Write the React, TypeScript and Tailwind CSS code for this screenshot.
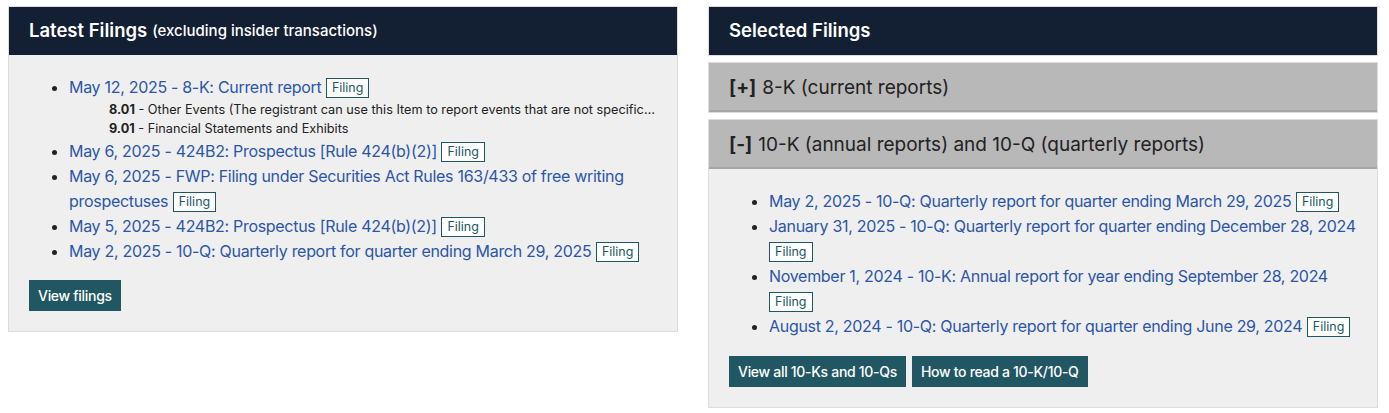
import React from "react";

const font = { fontFamily: "Inter, 'Noto Sans', Arial, sans-serif" };

function Badge() {
  return (
    <span className="inline-block border border-[#215762] bg-white px-[5px] py-0 align-[1px] text-[12.5px] leading-[18px] tracking-normal text-[#215762]">
      Filing
    </span>
  );
}

function Item({ text, sub }: { text: string; sub?: React.ReactNode }) {
  return (
    <li className="leading-[25px]">
      <a className="text-[16px] tracking-[-0.3px] text-[#2b56a8]">{text}</a>
      <span className="text-[16px]"> </span>
      <Badge />
      {sub}
    </li>
  );
}

function Header({ children }: { children: React.ReactNode }) {
  return (
    <div className="flex h-[48px] items-center bg-[#131f33] px-[20px] text-white">
      {children}
    </div>
  );
}

function Btn({ children }: { children: React.ReactNode }) {
  return (
    <span className="inline-flex h-[31px] items-center bg-[#215762] px-[9px] text-[14px] font-medium tracking-[-0.3px] text-white">
      {children}
    </span>
  );
}

function AccHead({ sign, label }: { sign: string; label: string }) {
  return (
    <div className="flex h-[49px] items-center border-b-2 border-[#a6a6a6] bg-[#b8b8b8] px-[20px] pt-[3px] text-[19px] text-[#222]">
      <b>{sign}</b>
      <span className="ml-[6px]">{label}</span>
    </div>
  );
}

export default function App() {
  return (
    <div className="flex gap-[30px] bg-white pl-[8px] pt-[6px] text-[#222]" style={font}>
      {/* Left */}
      <div className="w-[670px] self-start border border-[#dddddd]">
        <Header>
          <span className="text-[18.5px] font-semibold">Latest Filings</span>
          <span className="ml-[5px] text-[15px] font-medium">(excluding insider transactions)</span>
        </Header>
        <div className="bg-[#efefef] p-[20px]">
          <ul className="mb-[16px] list-disc pl-[40px] marker:text-[#222]">
            <Item
              text="May 12, 2025 - 8-K: Current report"
              sub={
                <div className="pb-[1px] pl-[40px] text-[12.7px] leading-[19px] text-[#222]">
                  <div className="overflow-hidden text-ellipsis whitespace-nowrap">
                    <b>8.01</b> - Other Events (The registrant can use this Item to report events that are not specifically called for by Form 8-K, that the registrant considers to be of importance to security holders.)
                  </div>
                  <div className="overflow-hidden text-ellipsis whitespace-nowrap">
                    <b>9.01</b> - Financial Statements and Exhibits
                  </div>
                </div>
              }
            />
            <Item text="May 6, 2025 - 424B2: Prospectus [Rule 424(b)(2)]" />
            <Item text="May 6, 2025 - FWP: Filing under Securities Act Rules 163/433 of free writing prospectuses" />
            <Item text="May 5, 2025 - 424B2: Prospectus [Rule 424(b)(2)]" />
            <Item text="May 2, 2025 - 10-Q: Quarterly report for quarter ending March 29, 2025" />
          </ul>
          <Btn>View filings</Btn>
        </div>
      </div>

      {/* Right */}
      <div className="flex w-[670px] flex-col gap-[6px]">
        <div className="border border-[#dddddd]">
          <Header>
            <span className="text-[18.5px] font-semibold">Selected Filings</span>
          </Header>
        </div>
        <div className="border border-[#dddddd]">
          <AccHead sign="[+]" label="8-K (current reports)" />
        </div>
        <div className="border border-[#dddddd]">
          <AccHead sign="[-]" label="10-K (annual reports) and 10-Q (quarterly reports)" />
          <div className="bg-[#efefef] p-[20px]">
            <ul className="mb-[17px] list-disc pl-[40px] marker:text-[#222]">
              <Item text="May 2, 2025 - 10-Q: Quarterly report for quarter ending March 29, 2025" />
              <Item text="January 31, 2025 - 10-Q: Quarterly report for quarter ending December 28, 2024" />
              <Item text="November 1, 2024 - 10-K: Annual report for year ending September 28, 2024" />
              <Item text="August 2, 2024 - 10-Q: Quarterly report for quarter ending June 29, 2024" />
            </ul>
            <div className="flex gap-[6px]">
              <Btn>View all 10-Ks and 10-Qs</Btn>
              <Btn>How to read a 10-K/10-Q</Btn>
            </div>
          </div>
        </div>
      </div>
    </div>
  );
}
